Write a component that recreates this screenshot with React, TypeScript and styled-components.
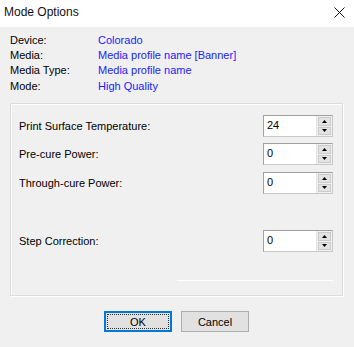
import React from "react";
import styled, { createGlobalStyle } from "styled-components";

const GlobalStyle = createGlobalStyle`
  html, body {
    margin: 0;
    padding: 0;
    background: #f0f0f0;
  }
  * {
    box-sizing: border-box;
  }
  #root {
    width: 354px;
    height: 347px;
  }
`;

const Window = styled.div`
  width: 354px;
  height: 347px;
  display: flex;
  flex-direction: column;
  font-family: "Liberation Sans", Arial, sans-serif;
  font-size: 11px;
  color: #000;
  background: #f0f0f0;
  overflow: hidden;
`;

const TitleBar = styled.div`
  height: 27px;
  background: #fff;
  display: flex;
  align-items: center;
  justify-content: space-between;
  padding: 0 8px 3px 4px;
  font-size: 12px;
  color: #111;
`;

const CloseButton = styled.button`
  border: none;
  background: transparent;
  padding: 0;
  width: 14px;
  height: 14px;
  display: flex;
  align-items: center;
  justify-content: center;
`;

const Body = styled.div`
  flex: 1;
  padding: 5px 11px 0 10px;
  display: flex;
  flex-direction: column;
`;

const InfoGrid = styled.div`
  display: grid;
  grid-template-columns: 88px auto;
  grid-auto-rows: 15.3px;
  align-items: center;
`;

const InfoValue = styled.span`
  color: #2222ff;
`;

const GroupBox = styled.div`
  margin-top: 10px;
  height: 193px;
  border: 1px solid #dcdcdc;
  box-shadow: inset 1px 1px 0 #fff, 1px 1px 0 #fff;
  padding: 11px 9px 0 8px;
  display: flex;
  flex-direction: column;
`;

const FieldRow = styled.div<{ $gapBefore?: number }>`
  height: 22px;
  margin-top: ${({ $gapBefore }) => $gapBefore ?? 0}px;
  display: flex;
  align-items: center;
  justify-content: space-between;
`;

const Spin = styled.div`
  width: 70px;
  height: 22px;
  display: flex;
  border: 1px solid #a0a0a0;
  border-right-color: #c8c8c8;
  border-bottom-color: #c8c8c8;
  background: #fff;
`;

const SpinText = styled.div`
  flex: 1;
  padding: 3px 0 0 3px;
`;

const SpinButtons = styled.div`
  width: 16px;
  display: flex;
  flex-direction: column;
  gap: 1px;
  padding: 1px;
  background: #f0f0f0;
  border-left: 1px solid #e3e3e3;
`;

const SpinArrow = styled.div`
  flex: 1;
  background: #e3e3e3;
  border: 1px solid #cbcbcb;
  display: flex;
  align-items: center;
  justify-content: center;
`;

const Separator = styled.div`
  margin: 28px 0 0 auto;
  width: 156px;
  height: 1px;
  background: #fff;
`;

const ButtonRow = styled.div`
  display: flex;
  justify-content: center;
  gap: 9px;
  margin-top: 15px;
`;

const DialogButton = styled.button<{ $default?: boolean }>`
  width: 68px;
  height: 21px;
  padding: 0;
  font-family: inherit;
  font-size: 11px;
  color: #000;
  background: #e1e1e1;
  border: ${({ $default }) => ($default ? "2px solid #0078d7" : "1px solid #adadad")};
  outline: ${({ $default }) => ($default ? "1px dotted #333" : "none")};
  outline-offset: -4px;
`;

function Arrow({ up }: { up?: boolean }) {
  return (
    <svg width="5" height="3" viewBox="0 0 5 3">
      <path d={up ? "M2.5 0 L5 3 L0 3 Z" : "M0 0 L5 0 L2.5 3 Z"} fill="#000" />
    </svg>
  );
}

function SpinBox({ value }: { value: string }) {
  return (
    <Spin>
      <SpinText>{value}</SpinText>
      <SpinButtons>
        <SpinArrow>
          <Arrow up />
        </SpinArrow>
        <SpinArrow>
          <Arrow />
        </SpinArrow>
      </SpinButtons>
    </Spin>
  );
}

const info = [
  ["Device:", "Colorado"],
  ["Media:", "Media profile name [Banner]"],
  ["Media Type:", "Media profile name"],
  ["Mode:", "High Quality"],
];

export default function App() {
  return (
    <>
      <GlobalStyle />
      <Window>
        <TitleBar>
          <span>Mode Options</span>
          <CloseButton>
            <svg width="11" height="11" viewBox="0 0 11 11">
              <path d="M0.5 0.5 L10.5 10.5 M10.5 0.5 L0.5 10.5" stroke="#111" strokeWidth="1" />
            </svg>
          </CloseButton>
        </TitleBar>
        <Body>
          <InfoGrid>
            {info.map(([label, value]) => (
              <React.Fragment key={label}>
                <span>{label}</span>
                <InfoValue>{value}</InfoValue>
              </React.Fragment>
            ))}
          </InfoGrid>
          <GroupBox>
            <FieldRow>
              <span>Print Surface Temperature:</span>
              <SpinBox value="24" />
            </FieldRow>
            <FieldRow $gapBefore={6}>
              <span>Pre-cure Power:</span>
              <SpinBox value="0" />
            </FieldRow>
            <FieldRow $gapBefore={7}>
              <span>Through-cure Power:</span>
              <SpinBox value="0" />
            </FieldRow>
            <FieldRow $gapBefore={36}>
              <span>Step Correction:</span>
              <SpinBox value="0" />
            </FieldRow>
            <Separator />
          </GroupBox>
          <ButtonRow>
            <DialogButton $default>OK</DialogButton>
            <DialogButton>Cancel</DialogButton>
          </ButtonRow>
        </Body>
      </Window>
    </>
  );
}
